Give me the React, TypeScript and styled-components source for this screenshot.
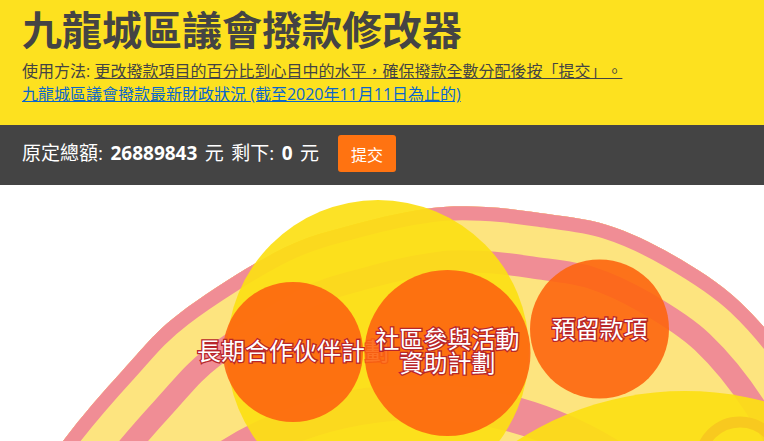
import React from "react";
import styled, { createGlobalStyle } from "styled-components";

const GlobalStyle = createGlobalStyle`
  html, body {
    margin: 0;
    padding: 0;
    overflow: hidden;
    background: #ffffff;
  }
  body {
    font-family: "Open Sans", "Noto Sans CJK TC", sans-serif;
    text-spacing-trim: space-all;
  }
`;

const PINK = "#f08d95";
const CREAM = "#fde47f";

const Page = styled.div`
  display: flex;
  flex-direction: column;
  width: 100vw;
  height: 100vh;
  overflow: hidden;
`;

const Header = styled.header`
  background: #fde11f;
  padding: 4px 22px 19px;
`;

const Title = styled.h1`
  margin: 0;
  font-family: "Noto Sans CJK TC", sans-serif;
  font-weight: 700;
  font-size: 40px;
  line-height: 48px;
  color: #444444;
`;

const Instructions = styled.p`
  margin: 8px 0 0;
  font-size: 16px;
  line-height: 23px;
  color: #444444;
`;

const Underlined = styled.span`
  text-decoration: underline;
`;

const InfoLink = styled.a`
  display: block;
  width: fit-content;
  font-size: 16px;
  line-height: 23px;
  color: #0a66cc;
  text-decoration: underline;
`;

const Toolbar = styled.div`
  display: flex;
  align-items: center;
  height: 60px;
  box-sizing: border-box;
  padding: 0 22px 3px;
  background: #444444;
  color: #ffffff;
  font-size: 19px;
`;

const Summary = styled.span`
  white-space: pre;
  word-spacing: 2.5px;
  margin-bottom: 4px;
`;

const Amount = styled.b`
  font-weight: 700;
`;

const SubmitButton = styled.button`
  margin-left: 19px;
  width: 58px;
  height: 37px;
  padding: 0;
  border: 0;
  border-radius: 3px;
  background: #ff7311;
  color: #ffffff;
  font-family: "Noto Sans CJK TC", sans-serif;
  font-size: 16px;
`;

const Chart = styled.div`
  flex: 1;
  overflow: hidden;
  background: #ffffff;
`;

const ChartSvg = styled.svg`
  display: block;
  width: 764px;
  height: 256px;
`;

const Band = styled.path<{ $color: string; $width: number }>`
  fill: none;
  stroke: ${(p) => p.$color};
  stroke-width: ${(p) => p.$width}px;
  stroke-linejoin: round;
`;

const Ring = styled.circle<{ $color: string; $width: number }>`
  fill: none;
  stroke: ${(p) => p.$color};
  stroke-width: ${(p) => p.$width}px;
`;

const Bubble = styled.circle<{ $kind: "group" | "leaf" }>`
  fill: ${(p) => (p.$kind === "group" ? "#fcdf14" : "#fd6510")};
  opacity: ${(p) => (p.$kind === "group" ? 0.92 : 0.9)};
`;

const BubbleLabel = styled.text`
  font-family: "Noto Sans CJK TC", sans-serif;
  font-size: 24px;
  fill: #ffffff;
  stroke: #b8262b;
  stroke-width: 2.6px;
  paint-order: stroke;
  text-anchor: middle;
  dominant-baseline: central;
`;

type Pt = [number, number];

const bowlPoints: Pt[] = [
  [-60, 640],
  [10, 520],
  [63, 441],
  [123, 370],
  [180, 313],
  [280, 250],
  [356, 224],
  [432, 208],
  [486, 207],
  [540, 213],
  [607, 225],
  [673, 255],
  [740, 302],
  [800, 375],
  [850, 470],
  [880, 600],
];

function smoothPath(pts: Pt[]): string {
  const f = (n: number) => n.toFixed(1);
  let d = `M${f(pts[0][0])},${f(pts[0][1])}`;
  for (let i = 0; i < pts.length - 1; i++) {
    const p0 = pts[i - 1] || pts[i];
    const p1 = pts[i];
    const p2 = pts[i + 1];
    const p3 = pts[i + 2] || p2;
    const c1x = p1[0] + (p2[0] - p0[0]) / 6;
    const c1y = p1[1] + (p2[1] - p0[1]) / 6;
    const c2x = p2[0] - (p3[0] - p1[0]) / 6;
    const c2y = p2[1] - (p3[1] - p1[1]) / 6;
    d += ` C${f(c1x)},${f(c1y)} ${f(c2x)},${f(c2y)} ${f(p2[0])},${f(p2[1])}`;
  }
  return d + " L880,900 L-60,900 Z";
}

const BOWL = smoothPath(bowlPoints);

const groups = [
  { cx: 378, cy: 351, r: 151 },
  { cx: 685, cy: 700, r: 309 },
];

const leaves = [
  { cx: 293, cy: 352, r: 70, ty: 349, lines: ["長期合作伙伴計劃"] },
  { cx: 447.5, cy: 353, r: 83, ty: 349, lines: ["社區參與活動", "資助計劃"] },
  { cx: 599.5, cy: 329, r: 69.5, ty: 326.5, lines: ["預留款項"] },
];

const LINE = 23.5;

function BudgetChart() {
  return (
    <ChartSvg viewBox="0 185 764 256">
      <defs>
        <clipPath id="bowl-clip">
          <path d={BOWL} />
        </clipPath>
      </defs>
      <g clipPath="url(#bowl-clip)">
        <rect x={-100} y={100} width={1000} height={900} fill={CREAM} />
        <Ring cx={420} cy={760} r={358} $color={PINK} $width={36} />
        <Band d={BOWL} $color={PINK} $width={132} />
        <Band d={BOWL} $color={CREAM} $width={88} />
        <Band d={BOWL} $color={PINK} $width={28} />
      </g>
      {groups.map((g, i) => (
        <Bubble key={i} cx={g.cx} cy={g.cy} r={g.r} $kind="group" />
      ))}
      <Ring cx={740} cy={462} r={40} $color="#f8c91f" $width={11} />
      {leaves.map((b, i) => {
        const start = b.ty - ((b.lines.length - 1) * LINE) / 2;
        return (
          <g key={i}>
            <Bubble cx={b.cx} cy={b.cy} r={b.r} $kind="leaf" />
            <BubbleLabel x={b.cx} y={start}>
              {b.lines.map((line, j) => (
                <tspan key={j} x={b.cx} dy={j === 0 ? 0 : LINE}>
                  {line}
                </tspan>
              ))}
            </BubbleLabel>
          </g>
        );
      })}
    </ChartSvg>
  );
}

export default function App() {
  return (
    <>
      <GlobalStyle />
      <Page>
        <Header>
          <Title>九龍城區議會撥款修改器</Title>
          <Instructions>
            使用方法: <Underlined>更改撥款項目的百分比到心目中的水平，確保撥款全數分配後按「提交」。</Underlined>
          </Instructions>
          <InfoLink href="#">九龍城區議會撥款最新財政狀況 (截至2020年11月11日為止的)</InfoLink>
        </Header>
        <Toolbar>
          <Summary>
            原定總額: <Amount>26889843</Amount> 元 剩下: <Amount>0</Amount> 元
          </Summary>
          <SubmitButton>提交</SubmitButton>
        </Toolbar>
        <Chart>
          <BudgetChart />
        </Chart>
      </Page>
    </>
  );
}
